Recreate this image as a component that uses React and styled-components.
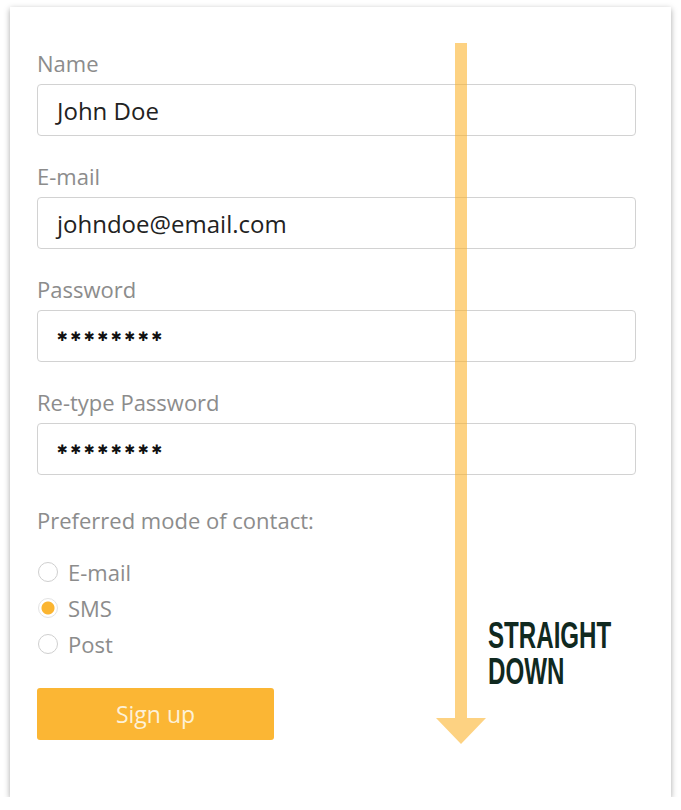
import React from 'react';
import styled, { createGlobalStyle } from 'styled-components';

const GlobalStyle = createGlobalStyle`
  body {
    margin: 0;
    background: #ffffff;
    font-family: "Open Sans", Lato, sans-serif;
  }
`;

const Card = styled.div`
  position: relative;
  box-sizing: border-box;
  margin: 7px 0 0 10px;
  width: 661px;
  height: 790px;
  background: #fff;
  box-shadow: 0 2px 6px rgba(0, 0, 0, 0.35);
  padding: 43px 0 0 27px;
`;

const Form = styled.form`
  width: 599px;
  display: flex;
  flex-direction: column;
`;

const Field = styled.div`
  display: flex;
  flex-direction: column;
  margin-bottom: 27px;
`;

const Label = styled.label`
  font-size: 22px;
  line-height: 27px;
  color: #8c8c8c;
  margin-bottom: 7px;
`;

const Input = styled.div`
  box-sizing: border-box;
  height: 52px;
  border: 1.5px solid #d2d2d2;
  border-radius: 4px;
  padding: 0 19px;
  display: flex;
  align-items: center;
  font-size: 24px;
  color: #222;
`;

const Stars = styled.span`
  font-family: "DejaVu Sans", sans-serif;
  font-size: 13px;
  letter-spacing: 2.6px;
  color: #111;
`;

const Question = styled.div`
  font-size: 22px;
  line-height: 27px;
  color: #8c8c8c;
  margin: 5px 0 24px;
`;

const Options = styled.div`
  display: flex;
  flex-direction: column;
  gap: 9px;
`;

const Option = styled.label`
  display: flex;
  align-items: center;
  gap: 10px;
  height: 27px;
  font-size: 22px;
  color: #8c8c8c;
  padding-left: 1px;
`;

const Dot = styled.span`
  box-sizing: border-box;
  width: 20px;
  height: 20px;
  border-radius: 50%;
  border: 1.5px solid ${p => (p.$on ? '#e3e3e3' : '#cfcfcf')};
  background: ${p => (p.$on ? 'radial-gradient(circle, #fbb531 0 6px, #fff 7px)' : '#fff')};
`;

const Button = styled.button`
  margin-top: 31px;
  width: 237px;
  height: 52px;
  border: none;
  border-radius: 3px;
  background: #fbb634;
  color: #fdf1d8;
  font-family: "Open Sans", Lato, sans-serif;
  font-size: 23px;
`;

const Arrow = styled.svg`
  position: absolute;
  left: 426px;
  top: 36px;
`;

const Note = styled.div`
  position: absolute;
  left: 478px;
  top: 611px;
  font-family: "Liberation Sans", Arial, sans-serif;
  font-weight: bold;
  font-size: 36px;
  line-height: 36px;
  color: #10291f;
  transform: scaleX(0.67);
  transform-origin: left top;
  white-space: nowrap;
`;

const fields = [
  { label: 'Name', value: 'John Doe' },
  { label: 'E-mail', value: 'johndoe@email.com' },
  { label: 'Password', value: '✱✱✱✱✱✱✱✱', secret: true },
  { label: 'Re-type Password', value: '✱✱✱✱✱✱✱✱', secret: true },
];

export default function App() {
  return (
    <>
      <GlobalStyle />
      <Card>
        <Form>
          {fields.map(f => (
            <Field key={f.label}>
              <Label>{f.label}</Label>
              <Input>{f.secret ? <Stars>{f.value}</Stars> : f.value}</Input>
            </Field>
          ))}
          <Question>Preferred mode of contact:</Question>
          <Options>
            <Option><Dot />E-mail</Option>
            <Option><Dot $on />SMS</Option>
            <Option><Dot />Post</Option>
          </Options>
          <Button type="button">Sign up</Button>
        </Form>
        <Arrow width="50" height="701" viewBox="0 0 50 701">
          <path d="M19 0 H31 V675 H50 L25 701 L0 675 H19 Z" fill="rgba(252,178,40,0.58)" />
        </Arrow>
        <Note>STRAIGHT<br />DOWN</Note>
      </Card>
    </>
  );
}
